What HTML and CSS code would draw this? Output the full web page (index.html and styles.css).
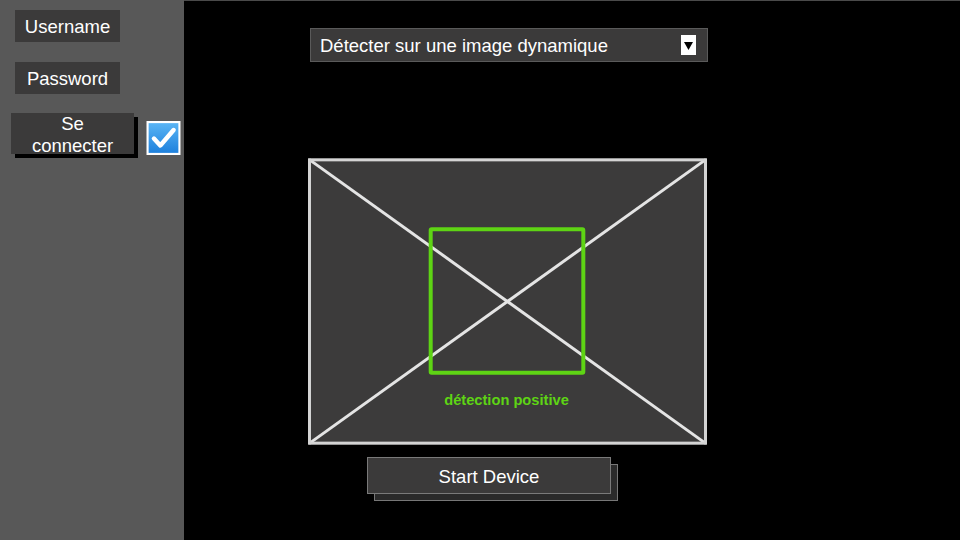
FILE: index.html
```html
<!DOCTYPE html>
<html lang="fr">
<head>
<meta charset="utf-8">
<link rel="stylesheet" href="styles.css">
</head>
<body>
<aside class="sidebar">
  <div class="field">Username</div>
  <div class="field field-pass">Password</div>
  <div class="login-row">
    <button class="login-btn">Se<br>connecter</button>
    <span class="checkbox">
      <svg width="32" height="32" viewBox="0 0 32 32">
        <defs>
          <linearGradient id="cb" x1="0" y1="0" x2="0" y2="1">
            <stop offset="0" stop-color="#5bb6f5"/>
            <stop offset="1" stop-color="#1c7fdc"/>
          </linearGradient>
        </defs>
        <rect x="1" y="1" width="30" height="30" fill="url(#cb)" stroke="#ffffff" stroke-width="2"/>
        <path d="M7 16.5 L13 23 L25.5 8.5" fill="none" stroke="#ffffff" stroke-width="4.2" stroke-linecap="round" stroke-linejoin="round"/>
      </svg>
    </span>
  </div>
</aside>
<main class="main">
  <div class="select">
    <span class="select-label">Détecter sur une image dynamique</span>
    <span class="select-arrow">
      <svg width="15" height="20" viewBox="0 0 15 20"><rect width="15" height="20" fill="#ffffff"/><path d="M3 7 L12 7 L7.5 15 Z" fill="#000000"/></svg>
    </span>
  </div>
  <div class="panel">
    <svg class="panel-svg" width="400" height="287" viewBox="0 0 400 287">
      <rect x="0" y="0" width="400" height="287" fill="#3c3b3b"/>
      <line x1="1" y1="1" x2="399" y2="286" stroke="#e4e4e4" stroke-width="3"/>
      <line x1="399" y1="1" x2="1" y2="286" stroke="#e4e4e4" stroke-width="3"/>
      <rect x="1.5" y="1.5" width="397" height="284" fill="none" stroke="#d4d4d4" stroke-width="3"/>
      <rect x="123" y="71" width="153" height="144" fill="none" stroke="#5ed414" stroke-width="4" rx="1"/>
      <text x="199" y="247" text-anchor="middle" class="detect-text">détection positive</text>
    </svg>
  </div>
  <div class="start-wrap">
    <span class="start-shadow"></span>
    <button class="start-btn">Start Device</button>
  </div>
</main>
</body>
</html>
```
FILE: styles.css
```css
* { box-sizing: border-box; }
html, body { margin: 0; padding: 0; }
body {
  width: 960px;
  height: 540px;
  display: flex;
  background: #000;
  font-family: "Liberation Sans", Arial, sans-serif;
  color: #fff;
  overflow: hidden;
}
.sidebar {
  width: 184px;
  flex: none;
  background: #585858;
  padding: 10px 0 0 15px;
  display: flex;
  flex-direction: column;
  align-items: flex-start;
}
.field {
  width: 105px;
  height: 32px;
  background: #3b3a3a;
  font-size: 18.5px;
  display: flex;
  align-items: center;
  justify-content: center;
  line-height: 1;
  padding-top: 3px;
}
.field-pass { margin-top: 20px; }
.login-row {
  margin-top: 19px;
  margin-left: -4px;
  display: flex;
  align-items: flex-start;
  gap: 12px;
}
.login-btn {
  width: 123px;
  height: 41px;
  background: #3b3a3a;
  border: none;
  color: #fff;
  font-family: inherit;
  font-size: 18.5px;
  line-height: 22px;
  padding: 0;
  box-shadow: 4px 4px 0 #000;
}
.checkbox {
  display: block;
  margin-top: 8px;
  width: 35px;
  height: 34px;
}
.checkbox svg { width: 35px; height: 34px; display: block; }
.main {
  flex: 1;
  border-top: 1px solid #4a4a4a;
  padding: 27px 0 0 124px;
  display: flex;
  flex-direction: column;
  align-items: flex-start;
}
.select {
  margin-left: 2px;
  width: 398px;
  height: 34px;
  background: #3b3a3a;
  border: 1px solid #5a5a5a;
  display: flex;
  align-items: center;
  justify-content: space-between;
  padding: 0 11px 0 9px;
}
.select-label { font-size: 18.5px; line-height: 1; padding-top: 3px; }
.select-arrow { display: block; width: 15px; height: 20px; }
.select-arrow svg { display: block; }
.panel {
  margin-top: 96px;
  width: 399px;
  height: 287px;
}
.panel-svg { display: block; width: 399px; }
.detect-text {
  font-family: "Liberation Sans", Arial, sans-serif;
  font-weight: bold;
  font-size: 14.7px;
  fill: #5ed414;
}
.start-wrap {
  position: relative;
  margin-top: 12px;
  margin-left: 59px;
  width: 251px;
  height: 44px;
}
.start-shadow {
  position: absolute;
  left: 7px;
  top: 7px;
  width: 244px;
  height: 37px;
  background: #2a2a2a;
  border: 1px solid #777;
}
.start-btn {
  position: relative;
  width: 244px;
  height: 37px;
  background: #3b3a3a;
  border: 1px solid #7a7a7a;
  color: #fff;
  font-family: inherit;
  font-size: 18.5px;
  padding: 2px 0 0;
}
```
